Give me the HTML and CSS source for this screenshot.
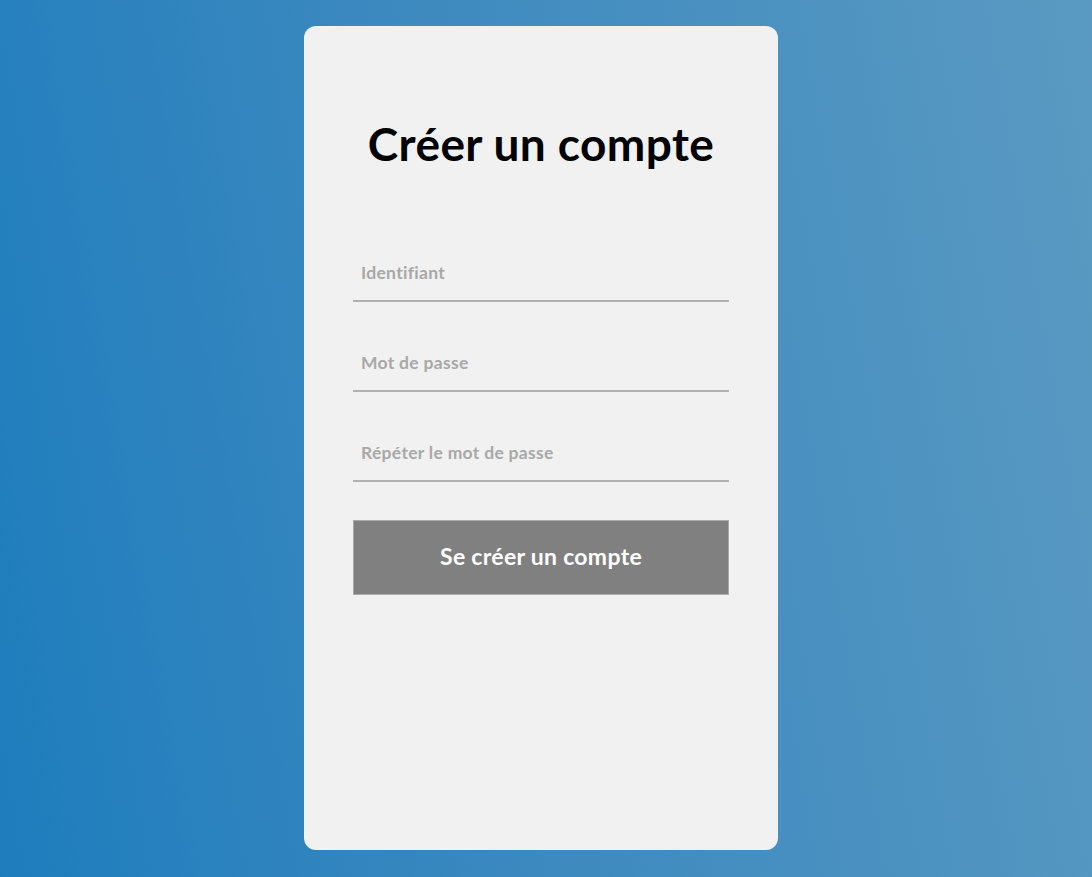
FILE: index.html
```html
<!DOCTYPE html>
<html lang="fr">
<head>
<meta charset="utf-8">
<title>Créer un compte</title>
<link rel="stylesheet" href="styles.css">
</head>
<body>
<main class="page">
  <form class="card">
    <h1 class="title">Créer un compte</h1>
    <div class="fields">
      <input class="field" type="text" placeholder="Identifiant">
      <input class="field" type="password" placeholder="Mot de passe">
      <input class="field" type="password" placeholder="Répéter le mot de passe">
      <button class="submit" type="button">Se créer un compte</button>
    </div>
  </form>
</main>
</body>
</html>
```
FILE: styles.css
```css
* { box-sizing: border-box; }
html, body { margin: 0; height: 100%; }
body {
  font-family: "Lato", "Noto Sans", sans-serif;
  background: linear-gradient(80deg, #1e7dbd 0%, #3a88bf 40%, #5a9ac2 100%);
}
.page {
  height: 877px;
  display: flex;
  justify-content: center;
  padding-top: 26px;
  padding-right: 10px;
}
.card {
  width: 474px;
  height: 824px;
  background: #f1f1f1;
  border-radius: 12px;
  padding: 0 49px;
  display: flex;
  flex-direction: column;
}
.title {
  margin: 90px 0 0;
  text-align: center;
  font-size: 46px;
  font-weight: 700;
  line-height: 56px;
  color: #000;
  letter-spacing: 0.4px;
}
.fields {
  margin-top: 80px;
  display: flex;
  flex-direction: column;
  gap: 40px;
}
.field {
  height: 50px;
  border: none;
  border-bottom: 2px solid #b1b1b1;
  background: transparent;
  padding: 0 8px 8px;
  font-family: inherit;
  font-size: 17.5px;
  font-weight: 700;
  letter-spacing: 0.3px;
  color: #555;
  outline: none;
}
.field::placeholder { color: #a8a8a8; }
.submit {
  margin-top: -2px;
  height: 75px;
  padding-bottom: 4px;
  background: #808080;
  border: 1px solid #aaaaaa;
  color: #fff;
  font-family: inherit;
  font-size: 23px;
  font-weight: 700;
  letter-spacing: 0.3px;
  cursor: pointer;
}
```
